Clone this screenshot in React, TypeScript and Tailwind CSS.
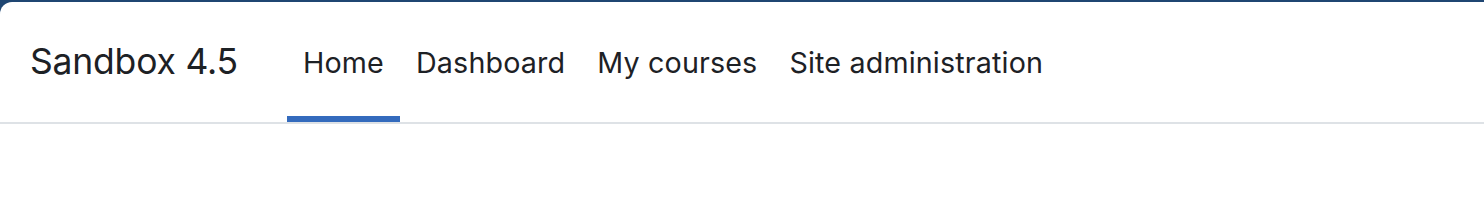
export default function App() {
  const items = ['Home', 'Dashboard', 'My courses', 'Site administration']
  const active = 'Home'

  return (
    <div className="h-screen bg-[#1f4672] pt-[2px] font-['Inter',sans-serif] text-[#1d2125]">
      <div className="h-full bg-white rounded-tl-[12px]">
        <nav className="flex h-[122px] items-stretch border-b-2 border-[#dee2e6] pl-[30px]">
          <div className="flex w-[257px] items-center text-[35.5px] tracking-[-0.2px]">Sandbox 4.5</div>
          <ul className="flex items-stretch">
            {items.map(item => (
              <li key={item} className="flex">
                <a
                  href="#"
                  className={`flex items-center px-[16px] pt-[8px] text-[28.7px] tracking-[0.15px] border-b-[6px] ${
                    item === active ? 'border-[#346bbd]' : 'border-transparent'
                  }`}
                >
                  {item}
                </a>
              </li>
            ))}
          </ul>
        </nav>
      </div>
    </div>
  )
}
